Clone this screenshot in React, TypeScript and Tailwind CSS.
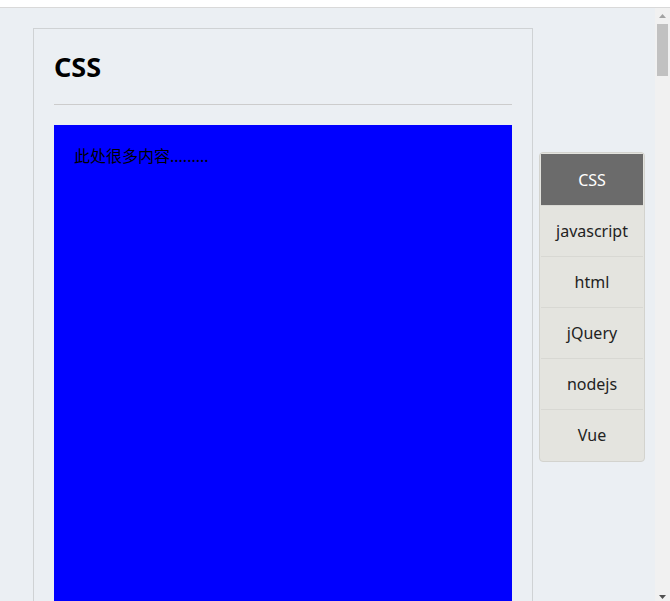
import React from 'react';

const items = ['CSS', 'javascript', 'html', 'jQuery', 'nodejs', 'Vue'];

export default function App() {
  return (
    <div className="h-[601px] w-[670px] flex flex-col overflow-hidden bg-white" style={{ fontFamily: '"Noto Sans", "Noto Sans CJK SC", sans-serif' }}>
      <div className="h-[8px] shrink-0 bg-white border-b border-[#d9d9d9]" />
      <div className="flex flex-1 min-h-0">
        <div className="w-[655px] bg-[#ebeff3] pt-[20px] pl-[33px] flex items-start gap-[6px] overflow-hidden">
          <div className="w-[500px] h-[1200px] shrink-0 border border-[#cfd2d4] px-[20px] pt-[19px]">
            <h2 className="h-[38px] text-[27px] leading-[38px] font-bold text-black">CSS</h2>
            <div className="mt-[18px] border-t border-[#cccccc]" />
            <div className="mt-[20px] h-[900px] bg-[#0000ff] p-[20px] text-[16px] leading-[22px] text-black">
              此处很多内容.........
            </div>
          </div>
          <div className="mt-[124px] w-[106px] shrink-0 rounded-[4px] border border-[#d3d3ce] bg-[#e4e4df] p-[1px]">
            {items.map((name, i) => (
              <div
                key={name}
                className={
                  i === 0
                    ? 'h-[51px] flex items-center justify-center bg-[#6b6b6b] text-white text-[16px]'
                    : 'h-[51px] flex items-center justify-center border-t border-[#d8d8d3] text-[#222] text-[16px]'
                }
              >
                {name}
              </div>
            ))}
          </div>
        </div>
        <div className="w-[15px] shrink-0 bg-[#f1f1f1] flex flex-col items-center relative">
          <svg width="7" height="4" viewBox="0 0 7 4" className="mt-[6px]">
            <path d="M0 4 L3.5 0 L7 4 Z" fill="#a3a3a3" />
          </svg>
          <div className="mt-[6px] w-[11px] h-[52px] bg-[#c1c1c1]" />
          <svg width="7" height="4" viewBox="0 0 7 4" className="absolute bottom-[2px] left-[4px]">
            <path d="M0 0 L7 0 L3.5 4 Z" fill="#505050" />
          </svg>
        </div>
      </div>
    </div>
  );
}
